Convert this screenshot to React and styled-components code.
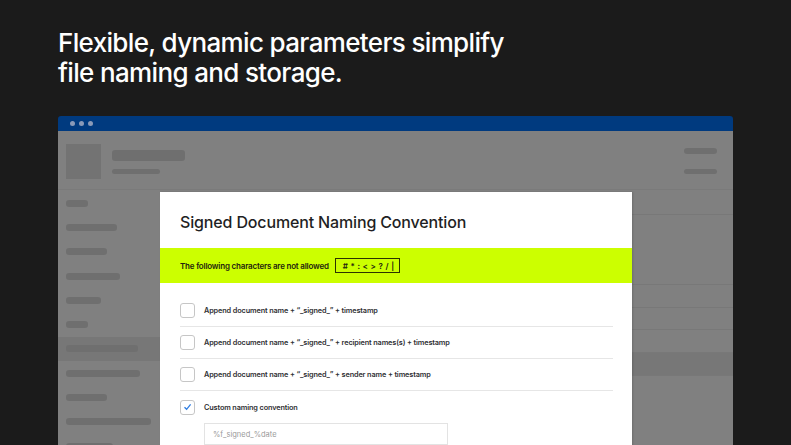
import React from "react";
import styled, { createGlobalStyle } from "styled-components";

const Global = createGlobalStyle`
  html, body { margin: 0; padding: 0; height: 445px; overflow: hidden; background: #1b1b1b; }
  #root { height: 445px; }
  * { box-sizing: border-box; }
`;

const Page = styled.div`
  height: 445px;
  display: flex;
  flex-direction: column;
  font-family: Inter, "Noto Sans", sans-serif;
`;

const Headline = styled.h1`
  margin: 0;
  padding: 28px 0 0 58px;
  color: #fff;
  font-size: 26px;
  line-height: 30px;
  font-weight: 500;
  letter-spacing: -0.65px;
  height: 116px;
  flex-shrink: 0;
`;

const Window = styled.div`
  margin: 0 58px;
  flex: 1;
  min-height: 0;
  display: flex;
  flex-direction: column;
  position: relative;
  overflow: hidden;
`;

const TitleBar = styled.div`
  height: 15px;
  flex-shrink: 0;
  background: #003a7f;
  border-radius: 3px 3px 0 0;
  display: flex;
  align-items: center;
  gap: 4px;
  padding-left: 12px;
`;

const Dot = styled.span`
  width: 5px;
  height: 5px;
  border-radius: 50%;
  background: #8a9ab8;
`;

const Content = styled.div`
  flex: 1;
  min-height: 0;
  background: #808080;
  display: flex;
  flex-direction: column;
`;

const Header = styled.div`
  height: 59px;
  flex-shrink: 0;
  display: flex;
  align-items: flex-start;
  padding: 13px 16px 0 8px;
  border-bottom: 1px solid #7a7a7a;
`;

const Avatar = styled.div`
  width: 35px;
  height: 35px;
  background: #737373;
`;

const HeaderText = styled.div`
  display: flex;
  flex-direction: column;
  gap: 8px;
  margin-left: 11px;
  padding-top: 6px;
  flex: 1;
`;

const Bar = styled.div`
  width: ${(p) => p.w}px;
  height: ${(p) => p.h || 6}px;
  border-radius: 3px;
  background: #6f6f6f;
  flex-shrink: 0;
`;

const HeaderRight = styled.div`
  display: flex;
  flex-direction: column;
  gap: 15px;
  padding-top: 4px;
`;

const Body = styled.div`
  flex: 1;
  display: flex;
`;

const Sidebar = styled.div`
  width: 102px;
  display: flex;
  flex-direction: column;
  padding-top: 1px;
`;

const SideItem = styled.div`
  height: 24.3px;
  flex-shrink: 0;
  display: flex;
  align-items: center;
  padding-left: 8px;
  background: ${(p) => (p.active ? "#777777" : "transparent")};
`;

const Main = styled.div`
  flex: 1;
  display: flex;
  flex-direction: column;
`;

const MainRow = styled.div`
  height: ${(p) => p.h}px;
  flex-shrink: 0;
  border-bottom: 1px solid #787878;
  background: ${(p) => (p.dark ? "#777777" : "transparent")};
`;

const Modal = styled.div`
  position: absolute;
  left: 102px;
  top: 76px;
  width: 472px;
  height: 300px;
  background: #fff;
  box-shadow: 1px 0 2px rgba(0, 0, 0, 0.15);
`;

const ModalTitle = styled.h2`
  margin: 0;
  height: 56px;
  padding: 4px 20px 0;
  display: flex;
  align-items: center;
  font-size: 16px;
  font-weight: 500;
  color: #1f1f24;
  letter-spacing: -0.15px;
`;

const Banner = styled.div`
  height: 35px;
  background: #ccff00;
  display: flex;
  align-items: center;
  gap: 6px;
  padding: 0 20px;
  font-size: 8px;
  font-weight: 600;
  letter-spacing: -0.2px;
  color: #23230f;
`;

const CharBox = styled.span`
  border: 1px solid #2c3300;
  height: 15px;
  padding: 0 5px 0 7px;
  display: inline-flex;
  align-items: center;
  letter-spacing: 0.3px;
  font-size: 8px;
`;

const List = styled.div`
  padding: 12px 19px 0 20px;
`;

const Row = styled.div`
  height: 32px;
  display: flex;
  align-items: center;
  gap: 9px;
  border-bottom: ${(p) => (p.last ? "none" : "1px solid #e6e6e6")};
`;

const Box = styled.span`
  width: 15px;
  height: 15px;
  border: 1px solid #c6c6c6;
  border-radius: 3px;
  display: inline-flex;
  align-items: center;
  justify-content: center;
  flex-shrink: 0;
`;

const Label = styled.span`
  font-size: 7.3px;
  font-weight: 600;
  letter-spacing: -0.12px;
  color: #2f2f33;
`;

const Input = styled.div`
  margin-left: 24px;
  width: 244px;
  height: 22px;
  border: 1px solid #e3e3e3;
  display: flex;
  align-items: center;
  padding-left: 8px;
  font-size: 7.5px;
  color: #9a9a9a;
`;

const options = [
  "Append document name + “_signed_” + timestamp",
  "Append document name + “_signed_” + recipient names(s) + timestamp",
  "Append document name + “_signed_” + sender name + timestamp",
];

const sideWidths = [22, 51, 41, 54, 35, 22, 72, 74, 41, 85, 47];

export default function App() {
  return (
    <Page>
      <Global />
      <Headline>
        Flexible, dynamic parameters simplify
        <br />
        file naming and storage.
      </Headline>
      <Window>
        <TitleBar>
          <Dot />
          <Dot />
          <Dot />
        </TitleBar>
        <Content>
          <Header>
            <Avatar />
            <HeaderText>
              <Bar w={73} h={11} />
              <Bar w={48} h={5} />
            </HeaderText>
            <HeaderRight>
              <Bar w={33} h={6} />
              <Bar w={33} h={5} />
            </HeaderRight>
          </Header>
          <Body>
            <Sidebar>
              {sideWidths.map((w, i) => (
                <SideItem key={i} active={i === 6}>
                  <Bar w={w} h={7} />
                </SideItem>
              ))}
            </Sidebar>
            <Main>
              <MainRow h={25} />
              <MainRow h={70} />
              <MainRow h={23} />
              <MainRow h={22} />
              <MainRow h={23} />
              <MainRow h={23} dark />
            </Main>
          </Body>
        </Content>
        <Modal>
          <ModalTitle>Signed Document Naming Convention</ModalTitle>
          <Banner>
            The following characters are not allowed
            <CharBox># * : &lt; &gt; ? / |</CharBox>
          </Banner>
          <List>
            {options.map((o) => (
              <Row key={o}>
                <Box />
                <Label>{o}</Label>
              </Row>
            ))}
            <Row last>
              <Box>
                <svg width="9" height="8" viewBox="0 0 9 8">
                  <path d="M1.5 4.2 L3.6 6.3 L7.6 1.3" fill="none" stroke="#2f7de1" strokeWidth="1.3" />
                </svg>
              </Box>
              <Label>Custom naming convention</Label>
            </Row>
            <Input>%f_signed_%date</Input>
          </List>
        </Modal>
      </Window>
    </Page>
  );
}
